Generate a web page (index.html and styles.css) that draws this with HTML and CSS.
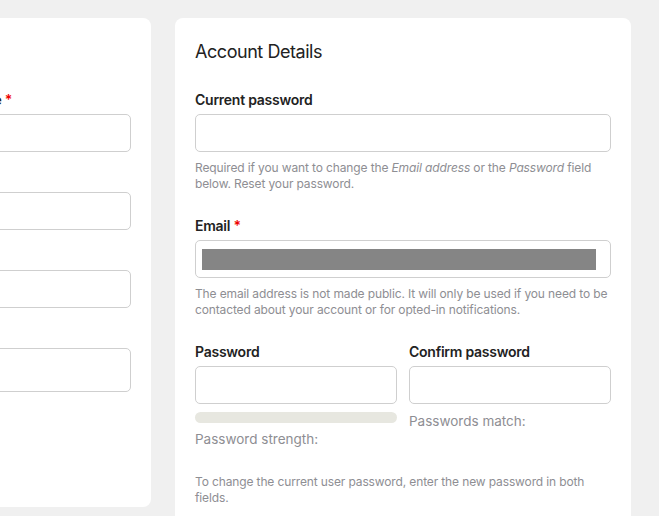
FILE: index.html
```html
<!DOCTYPE html>
<html lang="en">
<head>
<meta charset="utf-8">
<title>Account Details</title>
<link rel="stylesheet" href="styles.css">
</head>
<body>
<div class="layout">
  <section class="card card-left">
    <h2 class="card-title">Profile</h2>
    <div class="field">
      <label class="label">Username <span class="req">*</span></label>
      <div class="input"></div>
    </div>
    <div class="field">
      <label class="label">Name</label>
      <div class="input"></div>
    </div>
    <div class="field">
      <label class="label">Phone</label>
      <div class="input"></div>
    </div>
    <div class="field">
      <label class="label">Bio</label>
      <div class="input input-tall"></div>
    </div>
  </section>

  <section class="card card-right">
    <h2 class="card-title">Account Details</h2>
    <div class="field">
      <label class="label">Current password</label>
      <div class="input"></div>
      <p class="help">Required if you want to change the <em>Email address</em> or the <em>Password</em> field below. Reset your password.</p>
    </div>
    <div class="field">
      <label class="label">Email <span class="req">*</span></label>
      <div class="input"><span class="redacted"></span></div>
      <p class="help">The email address is not made public. It will only be used if you need to be contacted about your account or for opted-in notifications.</p>
    </div>
    <div class="field pw-row">
      <div class="pw-col">
        <label class="label">Password</label>
        <div class="input"></div>
        <div class="strength-bar"></div>
        <div class="status status-strength">Password strength:</div>
      </div>
      <div class="pw-col">
        <label class="label">Confirm password</label>
        <div class="input"></div>
        <div class="status status-match">Passwords match:</div>
      </div>
    </div>
    <p class="help help-last">To change the current user password, enter the new password in both fields.</p>
  </section>
</div>
</body>
</html>
```

FILE: styles.css
```css
html, body {
  margin: 0;
  padding: 0;
}

body {
  background: #f0f0f0;
  font-family: Inter, "Noto Sans", "Liberation Sans", sans-serif;
  color: #222;
}

.layout {
  display: flex;
  align-items: flex-start;
  gap: 24px;
  padding-top: 18px;
}

.card {
  background: #fff;
  border-radius: 8px;
  padding: 20px;
  box-sizing: border-box;
}

.card-left {
  width: 237px;
  margin-left: -86px;
  flex: none;
  padding-bottom: 115px;
}

.card-right {
  width: 456px;
  flex: none;
  padding-bottom: 40px;
}

.card-title {
  margin: 2px 0 27px;
  font-size: 18px;
  font-weight: 400;
  line-height: 24px;
  letter-spacing: -0.45px;
  color: #222;
}

.card-left .card-title {
  visibility: hidden;
}

.label {
  display: block;
  font-size: 14px;
  font-weight: 600;
  line-height: 18px;
  letter-spacing: -0.25px;
  margin-bottom: 5px;
  color: #222;
  white-space: nowrap;
}

.req {
  color: #e00;
}

.input {
  height: 38px;
  box-sizing: border-box;
  border: 1px solid #cfcfcf;
  border-radius: 5px;
  background: #fff;
  padding: 8px 14px 0 6px;
}

.input-tall {
  height: 44px;
}

.redacted {
  display: block;
  height: 21px;
  background: #858585;
}

.card-left .field + .field {
  margin-top: 17px;
}

.card-right .field + .field {
  margin-top: 25px;
}

.help {
  margin: 8px 0 0;
  font-size: 12px;
  line-height: 16px;
  letter-spacing: -0.13px;
  color: #8e8e93;
}

.help em {
  font-style: italic;
}

.pw-row {
  display: grid;
  grid-template-columns: 1fr 1fr;
  column-gap: 12px;
}

.strength-bar {
  height: 11px;
  margin-top: 8px;
  border-radius: 6px;
  background: #e7e7e0;
}

.status {
  font-size: 13.5px;
  line-height: 16px;
  color: #8e8e93;
}

.status-strength {
  margin-top: 8px;
}

.status-match {
  margin-top: 9px;
}

.help-last {
  margin-top: 27px;
}
```
